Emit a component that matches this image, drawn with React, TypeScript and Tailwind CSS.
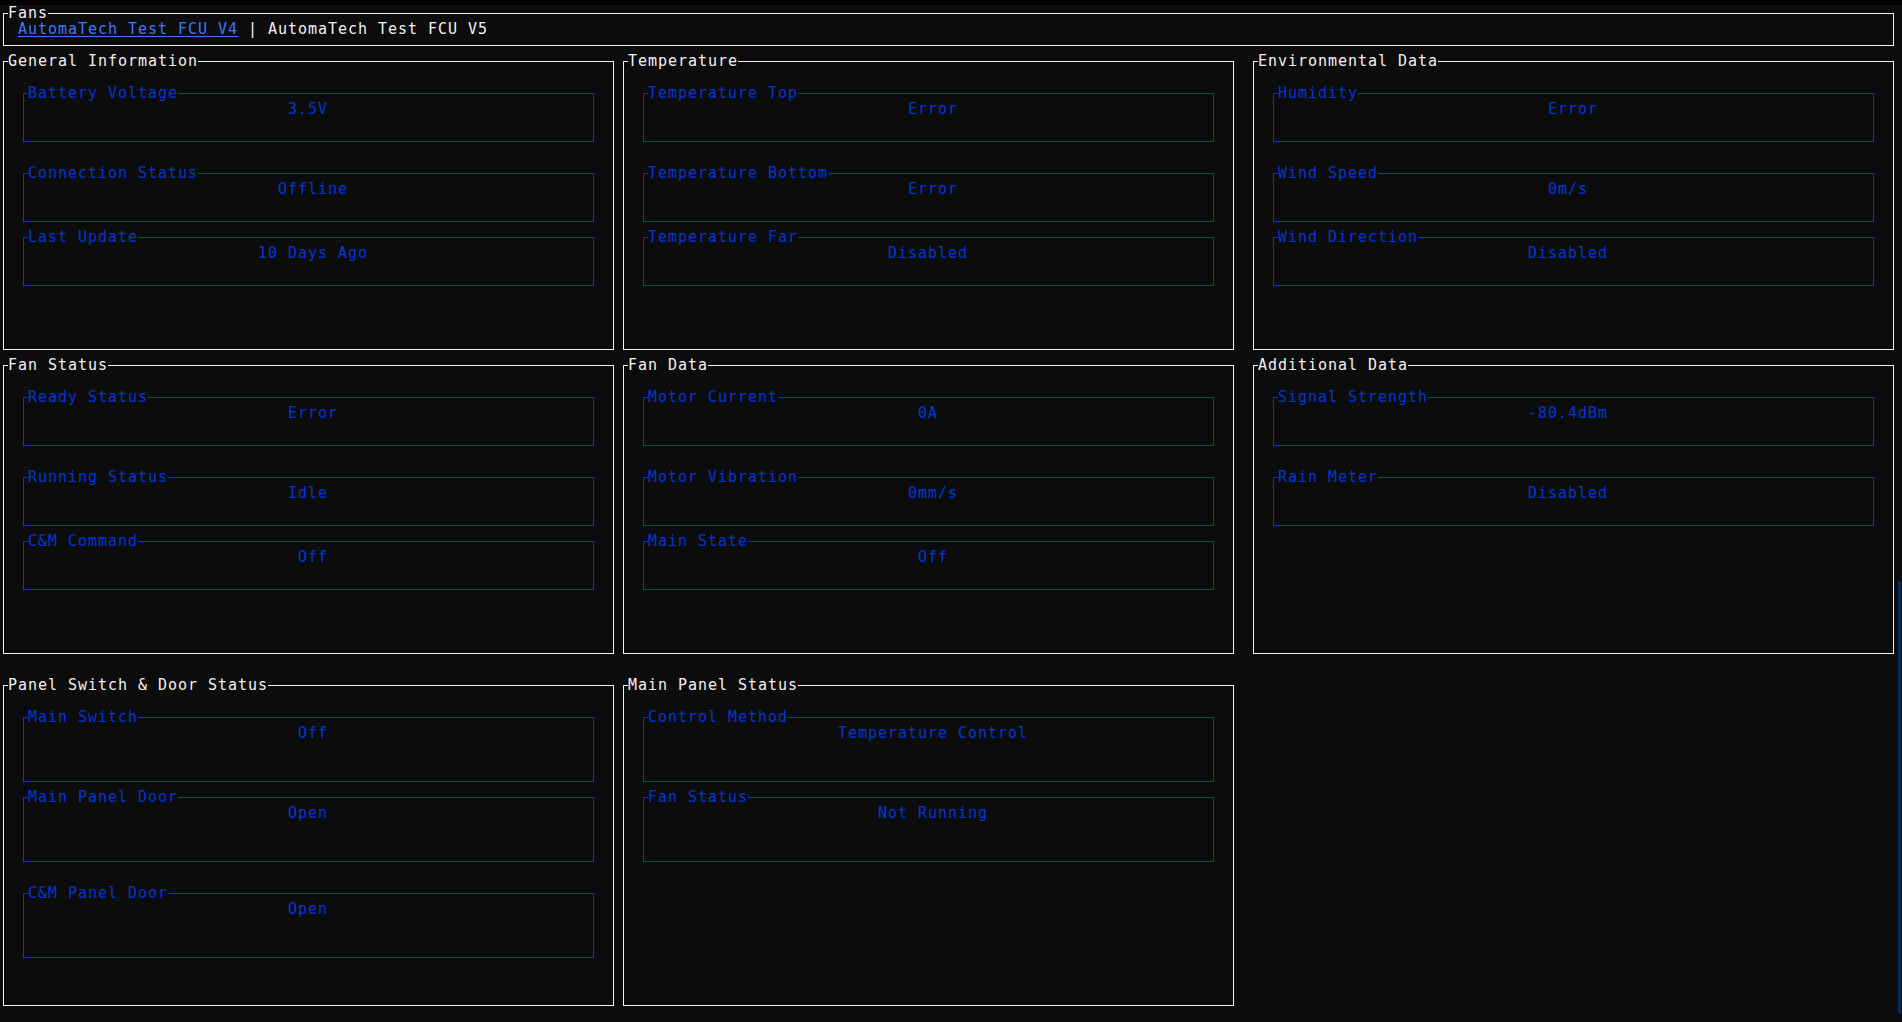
type Item = { label: string; value: string; gap: string; tall?: boolean }
type Panel = { title: string; wide?: boolean; offset: string; items: Item[] }

const topRow: Panel[] = [
  {
    title: "General Information",
    offset: "",
    items: [
      { label: "Battery Voltage", value: "3.5V", gap: "mt-[24px]" },
      { label: "Connection Status", value: "Offline", gap: "mt-[31px]" },
      { label: "Last Update", value: "10 Days Ago", gap: "mt-[15px]" },
    ],
  },
  {
    title: "Temperature",
    offset: "ml-[9px]",
    items: [
      { label: "Temperature Top", value: "Error", gap: "mt-[24px]" },
      { label: "Temperature Bottom", value: "Error", gap: "mt-[31px]" },
      { label: "Temperature Far", value: "Disabled", gap: "mt-[15px]" },
    ],
  },
  {
    title: "Environmental Data",
    wide: true,
    offset: "ml-[19px]",
    items: [
      { label: "Humidity", value: "Error", gap: "mt-[24px]" },
      { label: "Wind Speed", value: "0m/s", gap: "mt-[31px]" },
      { label: "Wind Direction", value: "Disabled", gap: "mt-[15px]" },
    ],
  },
]

const midRow: Panel[] = [
  {
    title: "Fan Status",
    offset: "",
    items: [
      { label: "Ready Status", value: "Error", gap: "mt-[24px]" },
      { label: "Running Status", value: "Idle", gap: "mt-[31px]" },
      { label: "C&M Command", value: "Off", gap: "mt-[15px]" },
    ],
  },
  {
    title: "Fan Data",
    offset: "ml-[9px]",
    items: [
      { label: "Motor Current", value: "0A", gap: "mt-[24px]" },
      { label: "Motor Vibration", value: "0mm/s", gap: "mt-[31px]" },
      { label: "Main State", value: "Off", gap: "mt-[15px]" },
    ],
  },
  {
    title: "Additional Data",
    wide: true,
    offset: "ml-[19px]",
    items: [
      { label: "Signal Strength", value: "-80.4dBm", gap: "mt-[24px]" },
      { label: "Rain Meter", value: "Disabled", gap: "mt-[31px]" },
    ],
  },
]

const bottomRow: Panel[] = [
  {
    title: "Panel Switch & Door Status",
    offset: "",
    items: [
      { label: "Main Switch", value: "Off", gap: "mt-[24px]", tall: true },
      { label: "Main Panel Door", value: "Open", gap: "mt-[15px]", tall: true },
      { label: "C&M Panel Door", value: "Open", gap: "mt-[31px]", tall: true },
    ],
  },
  {
    title: "Main Panel Status",
    offset: "ml-[9px]",
    items: [
      { label: "Control Method", value: "Temperature Control", gap: "mt-[24px]", tall: true },
      { label: "Fan Status", value: "Not Running", gap: "mt-[15px]", tall: true },
    ],
  },
]

// terminal centring rounds down on odd gaps, so nudge by half a cell
function valuePad(len: number, wide?: boolean) {
  if (wide) return len % 2 ? "pr-[1px]" : "pr-[11px]"
  return len % 2 ? "pl-[9px]" : "pr-[1px]"
}

function Field({ item, wide }: { item: Item; wide?: boolean }) {
  return (
    <div
      className={`${item.gap} mx-[19px] ${item.tall ? "h-[65px]" : "h-[49px]"} shrink-0 border border-[#0037da] text-[#0037da]`}
    >
      <div className="-mt-[9px] ml-[4px] flex h-4 leading-4">
        <span className="bg-[#0c0c0c] whitespace-pre">{item.label}</span>
      </div>
      <div className={`h-4 leading-4 text-center whitespace-pre ${valuePad(item.value.length, wide)}`}>
        {item.value}
      </div>
    </div>
  )
}

function Section({ panel, tall }: { panel: Panel; tall?: boolean }) {
  return (
    <div
      className={`${panel.offset} ${panel.wide ? "w-[641px]" : "w-[611px]"} ${tall ? "h-[321px]" : "h-[289px]"} flex shrink-0 flex-col border border-[#f2f2f2]`}
    >
      <div className="-mt-[9px] ml-[4px] flex h-4 leading-4 text-[#f2f2f2]">
        <span className="bg-[#0c0c0c] whitespace-pre">{panel.title}</span>
      </div>
      {panel.items.map((item) => (
        <Field key={item.label} item={item} wide={panel.wide} />
      ))}
    </div>
  )
}

export default function App() {
  return (
    <div className="relative h-[1022px] w-[1902px] overflow-hidden bg-[#0c0c0c] font-['DejaVu_Sans_Mono',monospace] text-[15px] tracking-[0.97px]">
      <div className="h-[5px] bg-black" />
      <div className="flex flex-col pt-[8px] pl-[3px]">
        <div className="h-[33px] w-[1891px] border border-[#f2f2f2]">
          <div className="-mt-[9px] ml-[4px] flex h-4 leading-4 text-[#f2f2f2]">
            <span className="bg-[#0c0c0c]">Fans</span>
          </div>
          <div className="flex h-4 pl-[14px] leading-4 whitespace-pre">
            <a className="text-[#3b78ff] underline decoration-[#3b78ff] underline-offset-[2px]">AutomaTech Test FCU V4</a>
            <span className="text-[#f2f2f2]"> | AutomaTech Test FCU V5</span>
          </div>
        </div>

        <div className="mt-[15px] flex">
          {topRow.map((p) => (
            <Section key={p.title} panel={p} />
          ))}
        </div>
        <div className="mt-[15px] flex">
          {midRow.map((p) => (
            <Section key={p.title} panel={p} />
          ))}
        </div>
        <div className="mt-[31px] flex">
          {bottomRow.map((p) => (
            <Section key={p.title} panel={p} tall />
          ))}
        </div>
      </div>

      {/* terminal scrollbar thumb */}
      <div className="absolute top-[581px] right-[1px] h-[432px] w-[3px] bg-[#0b2a5c]" />
    </div>
  )
}
